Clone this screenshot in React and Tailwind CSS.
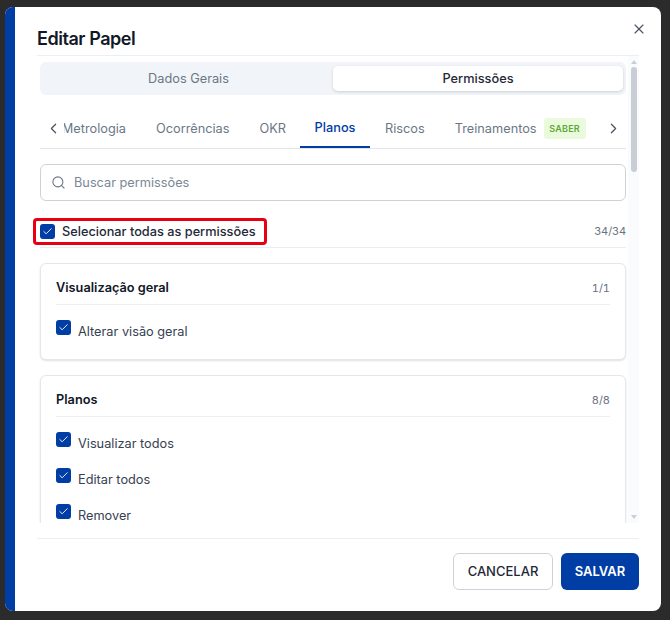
import { ChevronLeft, ChevronRight, Search, X, Check } from "lucide-react";

const FONT = "font-['Inter','Liberation_Sans',sans-serif]";

function Checkbox() {
  return (
    <span className="flex h-[15px] w-[15px] shrink-0 items-center justify-center rounded-[3px] bg-[#003da5]">
      <Check size={11} strokeWidth={2} className="text-white" />
    </span>
  );
}

function PermissionRow({ label }) {
  return (
    <div className="flex h-9 items-center">
      <span className="-mt-[5px]">
        <Checkbox />
      </span>
      <span className="ml-[7px] mt-[4px] text-[12.75px] leading-none text-[#374151]">{label}</span>
    </div>
  );
}

function PermissionCard({ title, count, items }) {
  return (
    <section className="rounded-[6px] border border-[#e5e7eb] bg-white px-[15px] shadow-[0_1px_2px_rgba(0,0,0,0.12)]">
      <div className="flex h-[41px] items-center justify-between border-b border-[#eceef1] pt-[8px]">
        <h3 className="text-[12.75px] font-semibold text-[#111827]">{title}</h3>
        <span className="text-[11px] tabular-nums text-[#6b7280]">{count}</span>
      </div>
      <div className="pt-[7px] pb-[11px]">
        {items.map((item) => (
          <PermissionRow key={item} label={item} />
        ))}
      </div>
    </section>
  );
}

export default function App() {
  return (
    <div className={`${FONT} h-[620px] w-[670px] overflow-hidden bg-[#2b2b2b] pt-[7px] pl-[5px]`}>
      <div className="flex h-[604px] w-[656px] overflow-hidden rounded-[8px] bg-white">
        <div className="w-[10px] shrink-0 bg-[#003da5]" />
        <div className="flex min-w-0 flex-1 flex-col pl-[22px] pr-[22px]">
          <header className="relative flex h-[49px] shrink-0 items-center border-b border-[#eceef1] pt-[14px]">
            <h2 className="text-[18px] font-semibold tracking-[-0.45px] text-[#111827]">Editar Papel</h2>
            <button className="absolute right-[-8px] top-[14px] text-[#4b5563]">
              <X size={16} strokeWidth={1.75} />
            </button>
          </header>

          <div className="relative mb-[15px] -ml-[7px] h-[467px] shrink-0 overflow-hidden pl-[10px] pr-[13px] pt-[6px]">
            <div className="absolute right-0 top-0 h-full w-[11px] bg-[#fafbfd]">
              <svg viewBox="0 0 6 4" className="absolute left-[3px] top-[4px] h-[4px] w-[6px]">
                <path d="M3 0 6 4H0Z" fill="#c9ced6" />
              </svg>
              <div className="absolute left-[3px] top-[11px] h-[105px] w-[6px] rounded-full bg-[#c9ced6]" />
              <svg viewBox="0 0 6 4" className="absolute bottom-[4px] left-[3px] h-[4px] w-[6px]">
                <path d="M0 0H6L3 4Z" fill="#c9ced6" />
              </svg>
            </div>

            <div className="flex h-[33px] rounded-[6px] bg-[#f1f4f8] p-[4px] pr-[3px] text-[12.75px]">
              <button className="flex-1 pt-[1px] text-[#6b7785]">Dados Gerais</button>
              <button className="w-[290px] rounded-[5px] bg-white pt-[1px] font-medium text-[#1f2937] shadow-[0_1px_3px_rgba(0,0,0,0.15)]">
                Permissões
              </button>
            </div>

            <div className="mt-[12px] flex h-[42px] items-center border-b border-[#e2e6eb] pt-[2px] text-[12.75px] text-[#6b7785]">
              <ChevronLeft size={17} strokeWidth={1.75} className="ml-[5px] shrink-0 text-[#4b5563]" />
              <div className="flex h-full min-w-0 flex-1 items-center overflow-hidden">
                <span className="ml-[2px] w-[62px] shrink-0 overflow-hidden">
                  <span className="float-right whitespace-nowrap">Metrologia</span>
                </span>
                <span className="ml-[30px] shrink-0">Ocorrências</span>
                <span className="ml-[30px] shrink-0">OKR</span>
                <span className="ml-[14px] flex h-full w-[70px] shrink-0 items-center justify-center border-b-2 border-[#003da5] font-medium text-[#003da5]">
                  Planos
                </span>
                <span className="ml-[15px] shrink-0">Riscos</span>
                <span className="ml-[30px] shrink-0">Treinamentos</span>
                <span className="ml-[7px] flex h-[21px] w-[42px] shrink-0 items-center justify-center rounded-[3px] bg-[#e9fbdc] text-[9px] font-semibold tracking-[0.2px] text-[#5ea83a]">
                  SABER
                </span>
              </div>
              <ChevronRight size={17} strokeWidth={1.75} className="mr-[4px] shrink-0 text-[#4b5563]" />
            </div>

            <div className="mt-[15px] flex h-[37px] items-center rounded-[6px] border border-[#ccd3da] px-[10px]">
              <Search size={15} strokeWidth={1.75} className="text-[#6b7785]" />
              <span className="ml-[8px] text-[12.75px] text-[#7a8796]">Buscar permissões</span>
            </div>

            <div className="relative mt-[14px] flex h-[33px] items-center justify-between border-b border-[#e9ecf0] pt-[1px]">
              <div className="flex items-center">
                <Checkbox />
                <span className="ml-[7px] text-[12.75px] font-medium text-[#1f2937]">
                  Selecionar todas as permissões
                </span>
              </div>
              <span className="text-[11px] text-[#6b7280]">34/34</span>
              <div className="absolute left-[-7px] top-[3px] h-[27px] w-[234px] rounded-[4px] border-[3px] border-[#e60012]" />
            </div>

            <div className="mt-[15px] flex flex-col gap-[15px]">
              <PermissionCard title="Visualização geral" count="1/1" items={["Alterar visão geral"]} />
              <PermissionCard title="Planos" count="8/8" items={["Visualizar todos", "Editar todos", "Remover"]} />
            </div>
          </div>

          <footer className="flex flex-1 items-start justify-end gap-2 border-t border-[#eceef1] pt-[14px]">
            <button className="h-[37px] w-[100px] rounded-[6px] border border-[#ccd3da] bg-white text-[13px] font-medium text-[#1f2937]">
              CANCELAR
            </button>
            <button className="h-[37px] w-[78px] rounded-[6px] bg-[#003da5] text-[13px] font-semibold text-white">
              SALVAR
            </button>
          </footer>
        </div>
      </div>
    </div>
  );
}
